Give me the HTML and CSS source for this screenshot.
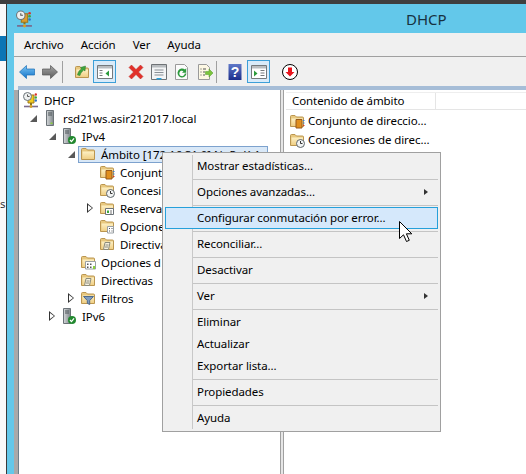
FILE: index.html
```html
<!DOCTYPE html>
<html lang="es">
  <head>
    <meta charset="UTF-8" />
    <meta name="viewport" content="width=device-width, initial-scale=1.0" />
    <title>DHCP</title>
    <link rel="stylesheet" href="styles.css">
  </head>
  <body>
    <svg class="defs" aria-hidden="true">
      <defs>
        <linearGradient id="g-folder" x1="0" y1="0" x2="0" y2="1">
          <stop offset="0" stop-color="#fdf0c4" />
          <stop offset="1" stop-color="#f0cf85" />
        </linearGradient>
        <linearGradient id="g-back" x1="0" y1="0" x2="0" y2="1">
          <stop offset="0" stop-color="#7cc6f5" />
          <stop offset="1" stop-color="#1272c8" />
        </linearGradient>
        <linearGradient id="g-fwd" x1="0" y1="0" x2="0" y2="1">
          <stop offset="0" stop-color="#a5a5a5" />
          <stop offset="1" stop-color="#5c5c5c" />
        </linearGradient>
        <linearGradient id="g-help" x1="0" y1="0" x2="0" y2="1">
          <stop offset="0" stop-color="#5f78c8" />
          <stop offset="1" stop-color="#1d2f8c" />
        </linearGradient>
        <linearGradient id="g-server" x1="0" y1="0" x2="1" y2="0">
          <stop offset="0" stop-color="#d5d8da" />
          <stop offset="1" stop-color="#7f868b" />
        </linearGradient>

        <symbol id="folder" viewBox="0 0 16 16">
          <path d="M1.5 13.5V3.5a1 1 0 0 1 1-1h3.5l1.5 1.5h6a1 1 0 0 1 1 1v8.5z" fill="#e8c87f" stroke="#bb9650" />
          <path d="M2.5 5.5h11.5v7.5H2.5z" fill="url(#g-folder)" />
        </symbol>

        <symbol id="dhcp" viewBox="0 0 16 16">
          <path d="M5 3h6v8H5z" fill="currentColor" stroke="#a0781a" />
          <path d="M7 11h2v2H7z" fill="#8a7420" />
          <path d="M1 14.500h14" stroke="#7a6a8c" stroke-width="1.6" />
          <circle cx="8" cy="14.500" r="1.4" fill="#d8a020" />
          <circle cx="4.500" cy="4.500" r="4" fill="#eef0f0" stroke="#6d7478" />
          <path d="M4.500 2.500v2h2" fill="none" stroke="#555" />
          <circle cx="12.800" cy="2.500" r="1.2" fill="#d8342a" />
          <circle cx="12.800" cy="5.500" r="1.2" fill="#3ca83c" />
          <circle cx="12.800" cy="8.500" r="1.2" fill="#2d72c8" />
        </symbol>

        <symbol id="server" viewBox="0 0 16 16">
          <path d="M4.500 .5h7v15h-7z" fill="url(#g-server)" stroke="#6c7378" />
          <path d="M6 3h4M6 5h4" stroke="#4f565b" />
          <path d="M8.500 12.500h2v1.500h-2z" fill="#8bd13a" />
        </symbol>

        <symbol id="server-ok" viewBox="0 0 16 16">
          <path d="M2.500 .5h7v15h-7z" fill="url(#g-server)" stroke="#6c7378" />
          <path d="M4 3h4M4 5h4" stroke="#4f565b" />
          <circle cx="11" cy="12" r="4" fill="#22892f" />
          <path d="M9 12l1.500 1.600L13 10.400" fill="none" stroke="#fff" stroke-width="1.3" />
        </symbol>

        <symbol id="f-book" viewBox="0 0 16 16">
          <use href="#folder" width="16" height="16" />
          <path d="M7 6.500h6v8.500H7z" fill="#e08f1e" stroke="#96591a" />
          <path d="M14 7.500h1.500M14 10h1.500" stroke="#3b7fd0" />
          <path d="M14 12.500h1.500" stroke="#d8342a" />
        </symbol>

        <symbol id="f-clock" viewBox="0 0 16 16">
          <use href="#folder" width="16" height="16" />
          <circle cx="11.500" cy="11.500" r="4" fill="#f2f4f4" stroke="#5f666b" />
          <path d="M11.500 9v2.500h2" fill="none" stroke="#333" />
        </symbol>

        <symbol id="f-res" viewBox="0 0 16 16">
          <use href="#folder" width="16" height="16" />
          <path d="M6.500 8.500h8v6h-8z" fill="#fff" stroke="#6c7378" />
          <path d="M8 10.500h2v2.500H8z" fill="#3ca83c" />
          <path d="M11 10.500h2v1h-2zM11 12.500h2v1h-2z" fill="#777" />
        </symbol>

        <symbol id="f-opt" viewBox="0 0 16 16">
          <use href="#folder" width="16" height="16" />
          <path d="M8.500 8.500h6v6.500h-6z" fill="#fff" stroke="#9aa0a4" />
          <path d="M10 10h1v1h-1zM12.500 10h1v1h-1zM10 12.500h1v1h-1zM12.500 12.500h1v1h-1z" fill="#555" />
        </symbol>

        <symbol id="f-opt-on" viewBox="0 0 16 16">
          <use href="#folder" width="16" height="16" />
          <path d="M5.500 7.500h10v7.500h-10z" fill="#fff" stroke="#9aa0a4" />
          <path d="M7 9.500h1.500v1.500H7zM10 9.500h1.500v1.500H10zM7 12.500h1.500V14H7zM10 12.500h1.500V14H10z" fill="#555" />
          <path d="M13 12h2v3h-2z" fill="#8bd13a" />
        </symbol>

        <symbol id="f-pol" viewBox="0 0 16 16">
          <use href="#folder" width="16" height="16" />
          <path d="M6 6.500h5l-1.500 7H4.500z" fill="#f7f1df" stroke="#8c8c7c" />
          <path d="M6.500 9h3M6 11h3" stroke="#8c8c7c" />
        </symbol>

        <symbol id="f-filter" viewBox="0 0 16 16">
          <use href="#folder" width="16" height="16" />
          <path d="M3.500 6.500h10l-3.800 4v4l-2.400-1.200v-2.800z" fill="#7e9cc0" stroke="#4f6a8c" />
        </symbol>

        <symbol id="win-left" viewBox="0 0 16 16">
          <path d="M.5 1.500h15v13H.5z" fill="#fff" stroke="#75797c" />
          <path d="M1 2h14v2.500H1z" fill="#b9bdc0" />
          <path d="M2.500 6.500h3M2.500 9h3M2.500 11.500h3" stroke="#75797c" />
          <path d="M12 6.500v6l-3.500-3z" fill="#2a9b3c" />
        </symbol>

        <symbol id="win-right" viewBox="0 0 16 16">
          <path d="M.5 1.500h15v13H.5z" fill="#fff" stroke="#75797c" />
          <path d="M1 2h14v2.500H1z" fill="#b9bdc0" />
          <path d="M3 6.500v6l3.500-3z" fill="#2a9b3c" />
          <path d="M9.500 6.500h4M9.500 9h4M9.500 11.500h4" stroke="#75797c" />
        </symbol>
      </defs>
    </svg>

    <div class="topline"></div>
    <div class="screen">
      <aside class="desk-strip">
        <div class="desk-tile"></div>
        <span class="desk-char">s</span>
      </aside>

      <main class="window">
        <header class="titlebar">
          <svg class="app-icon"><use href="#dhcp" /></svg>
          <span class="title">DHCP</span>
        </header>

        <div class="inner">
          <nav class="menubar">
            <span>Archivo</span>
            <span>Acción</span>
            <span>Ver</span>
            <span>Ayuda</span>
          </nav>

          <div class="toolbar">
            <span class="tool">
              <svg viewBox="0 0 16 16"><path d="M.5 8L7.500 1.500V5H15.500v6H7.500v3.500z" fill="url(#g-back)" stroke="#1b6fb5" stroke-width=".7" /></svg>
            </span>
            <span class="tool">
              <svg viewBox="0 0 16 16"><path d="M15.500 8L8.500 1.500V5H.5v6h8v3.500z" fill="url(#g-fwd)" stroke="#555" stroke-width=".7" /></svg>
            </span>
            <span class="sep sep-wide"></span>
            <span class="tool">
              <svg viewBox="0 0 16 16">
                <use href="#folder" width="16" height="16" />
                <path d="M3.500 11C4 8 5.500 6 7.500 5L6.500 3.500 11.500 2 11 7 9.700 6C8 7.500 6.500 9 6 11.500z" fill="#3fa53f" stroke="#2a7a2a" stroke-width=".5" />
              </svg>
            </span>
            <span class="tool tool-on"><svg viewBox="0 0 16 16"><use href="#win-left" /></svg></span>
            <span class="tool tool-gap">
              <svg viewBox="0 0 16 16"><path d="M1 3.500L3.500 1 8 5.500 12.500 1 15 3.500 10.500 8 15 12.500 12.500 15 8 10.500 3.500 15 1 12.500 5.500 8z" fill="#e2302a" stroke="#b92a24" stroke-width=".5" /></svg>
            </span>
            <span class="tool">
              <svg viewBox="0 0 16 16">
                <path d="M.5 .5h15v15H.5z" fill="#f4f5f6" stroke="#6f7376" />
                <path d="M1 1h14v2.500H1z" fill="#b9bdc0" />
                <path d="M3.500 6h9M3.500 8.500h9M3.500 11h9" stroke="#8a9096" />
                <path d="M5.500 14h5v1.500h-5z" fill="#27a0dc" />
              </svg>
            </span>
            <span class="tool">
              <svg viewBox="0 0 16 16">
                <path d="M1.500 .5h9l3 3v12h-12z" fill="#fbfbfb" stroke="#9a9a9a" />
                <path d="M12.500 9.500a4.500 4.500 0 1 1-1.500-4l1.200-1.200v4.400H8l1.500-1.500a2.700 2.700 0 1 0 1.200 2.300z" fill="#2c9a3c" />
              </svg>
            </span>
            <span class="tool">
              <svg viewBox="0 0 16 16">
                <path d="M1.500 .5h8l3 3v12h-11z" fill="#fdf8e4" stroke="#9a9a9a" />
                <path d="M3.500 5h1M6 5h3M3.500 8h1M6 8h2M3.500 11h1M6 11h2" stroke="#555" />
                <path d="M8.500 7.500h3.500V5l4 4-4 4v-2.500H8.500z" fill="#7cc43c" stroke="#4f9a2a" stroke-width=".5" />
              </svg>
            </span>
            <span class="sep sep-mid"></span>
            <span class="tool">
              <svg viewBox="0 0 16 16">
                <path d="M1.500 0h13v16h-13z" fill="url(#g-help)" />
                <text x="8" y="13" class="help-mark">?</text>
              </svg>
            </span>
            <span class="tool tool-on tool-next"><svg viewBox="0 0 16 16"><use href="#win-right" /></svg></span>
            <span class="tool tool-gap">
              <svg viewBox="0 0 16 16">
                <circle cx="8" cy="8" r="7.500" fill="#fff" stroke="#000" />
                <path d="M6 3.500h4V8h2.500L8 12.500 3.500 8H6z" fill="#e8141c" />
              </svg>
            </span>
          </div>

          <div class="band"></div>

          <div class="panes">
            <section class="tree">
              <div class="row l0"><svg class="ico ico-top"><use href="#dhcp" /></svg><span>DHCP</span></div>
              <div class="row l1"><i class="exp open"></i><svg class="ico"><use href="#server" /></svg><span>rsd21ws.asir212017.local</span></div>
              <div class="row l2"><i class="exp open"></i><svg class="ico"><use href="#server-ok" /></svg><span>IPv4</span></div>
              <div class="row l3">
                <i class="exp open"></i>
                <div class="selected"><svg class="ico"><use href="#folder" /></svg><span>Ámbito [172.16.31.0] NoPoK-1</span></div>
              </div>
              <div class="row l4"><i class="exp"></i><svg class="ico"><use href="#f-book" /></svg><span>Conjunt</span></div>
              <div class="row l4"><i class="exp"></i><svg class="ico"><use href="#f-clock" /></svg><span>Concesi</span></div>
              <div class="row l4"><i class="exp shut"></i><svg class="ico"><use href="#f-res" /></svg><span>Reservas</span></div>
              <div class="row l4"><i class="exp"></i><svg class="ico"><use href="#f-opt" /></svg><span>Opcione</span></div>
              <div class="row l4"><i class="exp"></i><svg class="ico"><use href="#f-pol" /></svg><span>Directiva</span></div>
              <div class="row l3"><i class="exp"></i><svg class="ico"><use href="#f-opt-on" /></svg><span>Opciones d</span></div>
              <div class="row l3"><i class="exp"></i><svg class="ico"><use href="#f-pol" /></svg><span>Directivas</span></div>
              <div class="row l3"><i class="exp shut"></i><svg class="ico"><use href="#f-filter" /></svg><span>Filtros</span></div>
              <div class="row l2"><i class="exp shut"></i><svg class="ico"><use href="#server-ok" /></svg><span>IPv6</span></div>
            </section>

            <div class="splitter"></div>

            <section class="detail">
              <div class="col-head"><span class="col-name">Contenido de ámbito</span></div>
              <div class="list-row"><svg class="ico"><use href="#f-book" /></svg><span>Conjunto de direccio...</span></div>
              <div class="list-row"><svg class="ico"><use href="#f-clock" /></svg><span>Concesiones de direc...</span></div>
              <div class="list-row"><svg class="ico"><use href="#f-res" /></svg></div>
            </section>
          </div>
        </div>
      </main>
    </div>

    <ul class="ctx">
      <li>Mostrar estadísticas...</li>
      <li class="line"></li>
      <li class="more">Opciones avanzadas...</li>
      <li class="line"></li>
      <li class="hover">Configurar conmutación por error...</li>
      <li class="line"></li>
      <li>Reconciliar...</li>
      <li class="line"></li>
      <li>Desactivar</li>
      <li class="line"></li>
      <li class="more">Ver</li>
      <li class="line"></li>
      <li>Eliminar</li>
      <li>Actualizar</li>
      <li>Exportar lista...</li>
      <li class="line"></li>
      <li>Propiedades</li>
      <li class="line"></li>
      <li>Ayuda</li>
    </ul>

    <svg class="pointer" viewBox="0 0 14 22">
      <path d="M.5 .5V17.500L4.500 13.800 7.500 20.500 10.300 19.300 7.400 12.800H12.800z" fill="#fff" stroke="#000" />
    </svg>
  </body>
</html>
```

FILE: styles.css
```css
* {
  box-sizing: border-box;
}
body {
  margin: 0;
  width: 526px;
  height: 474px;
  overflow: hidden;
  position: relative;
  background: #fff;
  font-family: "Noto Sans", "Open Sans", sans-serif;
  font-size: 11.5px;
  letter-spacing: -0.08px;
  color: #000;
}
.defs {
  display: block;
  width: 0;
  height: 0;
}
.topline {
  height: 4px;
  background: #3f3f3f;
}
.screen {
  display: flex;
  height: 470px;
}

/* bit of desktop left of the window */
.desk-strip {
  width: 6px;
  flex: none;
  overflow: hidden;
  padding-top: 32px;
  background: #f9f9f9;
}
.desk-tile {
  height: 25px;
  background: #0b75b5;
}
.desk-char {
  display: block;
  margin-top: 135px;
  color: #333;
}

.window {
  flex: 1;
  display: flex;
  flex-direction: column;
  min-width: 0;
  border-left: 1px solid #3a3a3a;
  background: #63c8ea;
}
.titlebar {
  height: 29px;
  flex: none;
  display: flex;
  align-items: center;
  padding-left: 9px;
}
.app-icon {
  width: 17px;
  height: 18px;
  flex: none;
  color: #dd9c2c;
}
.title {
  margin-left: 373px;
  font-size: 15px;
  letter-spacing: 0;
  color: #17323f;
}
.inner {
  flex: 1;
  display: flex;
  flex-direction: column;
  margin-left: 7px;
  min-height: 0;
  background: #f0f0f0;
}
.menubar {
  height: 24px;
  flex: none;
  display: flex;
  align-items: center;
  gap: 17px;
  padding-left: 10px;
  border-bottom: 1px solid #a0a0a0;
}
.toolbar {
  height: 29px;
  flex: none;
  display: flex;
  align-items: center;
  padding-left: 1px;
}
.tool {
  width: 23px;
  height: 23px;
  flex: none;
  display: flex;
  align-items: center;
  justify-content: center;
  border: 1px solid transparent;
}
.tool svg {
  width: 16px;
  height: 16px;
}
.tool-on {
  background: #d9ebf9;
  border-color: #3c9fd8;
}
.tool-gap {
  margin-left: 8px;
}
.tool-next {
  margin-left: 1px;
}
.sep {
  width: 1px;
  height: 22px;
  flex: none;
  background: #a0a0a0;
}
.sep-wide {
  margin: 0 7px 0 1px;
}
.sep-mid {
  margin-right: 6px;
}
.help-mark {
  font-family: "Liberation Sans", sans-serif;
  font-size: 14px;
  font-weight: bold;
  fill: #fff;
  text-anchor: middle;
}
.band {
  height: 4px;
  flex: none;
  margin-left: 4px;
  background: #a6bdd7;
}
.panes {
  flex: 1;
  display: flex;
  min-height: 0;
  background: #a9a9a9;
  padding-left: 4px;
}
.tree {
  width: 263px;
  flex: none;
  padding-top: 1px;
  overflow: hidden;
  white-space: nowrap;
  background: #fff;
  border-left: 1px solid #6d7f8c;
  border-right: 1px solid #a0a0a0;
}
.splitter {
  width: 2px;
  flex: none;
  background: #e6e6e6;
}
.row {
  height: 18px;
  display: flex;
  align-items: center;
}
.row span {
  padding-top: 1px;
}
.l0 {
  padding-left: 4px;
}
.l1 {
  padding-left: 9px;
}
.l2 {
  padding-left: 28px;
}
.l3 {
  padding-left: 47px;
}
.l4 {
  padding-left: 66px;
}
.ico {
  width: 16px;
  height: 16px;
  flex: none;
  margin-right: 5px;
}
.ico-top {
  color: #f1cc1e;
}
.exp {
  width: 10px;
  height: 10px;
  flex: none;
  margin-right: 4px;
  position: relative;
}
.exp.open::before {
  content: "";
  position: absolute;
  right: 1px;
  bottom: 1px;
  border-style: solid;
  border-width: 0 0 7px 7px;
  border-color: transparent transparent #595959 transparent;
}
.exp.shut::before {
  content: "";
  position: absolute;
  left: 2px;
  top: 0;
  border-style: solid;
  border-width: 5px 0 5px 6px;
  border-color: transparent transparent transparent #333;
}
.exp.shut::after {
  content: "";
  position: absolute;
  left: 3px;
  top: 2px;
  border-style: solid;
  border-width: 3px 0 3px 4px;
  border-color: transparent transparent transparent #fff;
}
.selected {
  width: 190px;
  height: 17px;
  margin-left: -2px;
  padding-left: 1px;
  display: flex;
  align-items: center;
  border: 1px solid #7da2ce;
  background: #d9e8f7;
}
.detail {
  flex: 1;
  min-width: 0;
  padding: 2px 0 0 2px;
  white-space: nowrap;
  background: #fff;
  border-left: 1px solid #a0a0a0;
}
.col-head {
  height: 18px;
  margin-bottom: 1px;
  border-top: 1px solid #eee;
  border-bottom: 1px solid #e5e5e5;
}
.col-name {
  display: block;
  width: 150px;
  height: 100%;
  padding-left: 6px;
  line-height: 15px;
  border-right: 1px solid #e5e5e5;
}
.list-row {
  height: 19px;
  display: flex;
  align-items: center;
  padding-left: 3px;
}
.list-row .ico {
  margin-right: 3px;
}

/* context menu */
.ctx {
  position: absolute;
  left: 162px;
  top: 152px;
  width: 279px;
  height: 280px;
  margin: 0;
  padding: 2px;
  list-style: none;
  background: #f0f0f0;
  border: 1px solid #a0a0a0;
}
.ctx::before {
  content: "";
  position: absolute;
  left: 29px;
  top: 2px;
  bottom: 2px;
  width: 1px;
  background: #c8c8c8;
}
.ctx li {
  position: relative;
  height: 22px;
  line-height: 22px;
  padding-left: 32px;
}
.ctx li.line {
  height: 4px;
  margin-left: 28px;
  padding: 0;
  background: linear-gradient(#c4c4c4, #c4c4c4) center / 100% 1px no-repeat;
}
.ctx li.hover {
  background: #d5e8fb;
  outline: 1px solid #26a0da;
  outline-offset: -1px;
}
.ctx li.more::after {
  content: "";
  position: absolute;
  right: 10px;
  top: 8px;
  border-style: solid;
  border-width: 3px 0 3px 4px;
  border-color: transparent transparent transparent #333;
}
.pointer {
  position: absolute;
  left: 399px;
  top: 221px;
  width: 14px;
  height: 22px;
}
```
